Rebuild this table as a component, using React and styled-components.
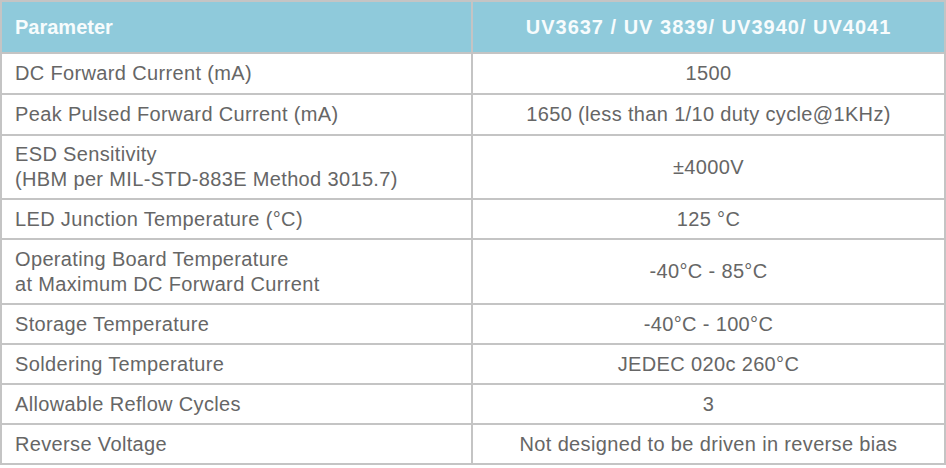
import React from 'react';
import styled, { createGlobalStyle } from 'styled-components';

const GlobalStyle = createGlobalStyle`
  html, body {
    margin: 0;
    padding: 0;
    background: #fff;
  }
`;

const Table = styled.table`
  width: 946px;
  border-collapse: collapse;
  font-family: "Liberation Sans", Arial, sans-serif;
  font-size: 20px;
  color: #666;
  border: 2px solid #c4c4c4;
`;

const HeadRow = styled.tr`
  height: 52px;
  background: #8fcadb;
`;

const HeadCell = styled.th`
  padding: 0 13px;
  font-weight: bold;
  color: #f7fcfd;
  letter-spacing: ${(p) => (p.$center ? '1px' : '0')};
  text-align: ${(p) => (p.$center ? 'center' : 'left')};
  border: 2px solid #c4c4c4;
  border-top-width: 1px;
  width: ${(p) => (p.$center ? 'auto' : '443px')};
`;

const Row = styled.tr`
  height: ${(p) => p.$h}px;
`;

const Cell = styled.td`
  padding: 0 13px;
  line-height: 25px;
  letter-spacing: 0.35px;
  text-align: ${(p) => (p.$center ? 'center' : 'left')};
  border: 2px solid #c4c4c4;
`;

const rows = [
  { h: 41, label: ['DC Forward Current (mA)'], value: '1500' },
  { h: 41, label: ['Peak Pulsed Forward Current (mA)'], value: '1650 (less than 1/10 duty cycle@1KHz)' },
  { h: 64, label: ['ESD Sensitivity', '(HBM per MIL-STD-883E Method 3015.7)'], value: '±4000V' },
  { h: 40, label: ['LED Junction Temperature (°C)'], value: '125 °C' },
  { h: 65, label: ['Operating Board Temperature', 'at Maximum DC Forward Current'], value: '-40°C - 85°C' },
  { h: 40, label: ['Storage Temperature'], value: '-40°C - 100°C' },
  { h: 40, label: ['Soldering Temperature'], value: 'JEDEC 020c 260°C' },
  { h: 40, label: ['Allowable Reflow Cycles'], value: '3' },
  { h: 40, label: ['Reverse Voltage'], value: 'Not designed to be driven in reverse bias' },
];

export default function App() {
  return (
    <>
      <GlobalStyle />
      <Table>
        <thead>
          <HeadRow>
            <HeadCell>Parameter</HeadCell>
            <HeadCell $center>UV3637 / UV 3839/ UV3940/ UV4041</HeadCell>
          </HeadRow>
        </thead>
        <tbody>
          {rows.map((r) => (
            <Row key={r.label[0]} $h={r.h}>
              <Cell>
                {r.label.map((l, i) => (
                  <React.Fragment key={l}>
                    {i > 0 && <br />}
                    {l}
                  </React.Fragment>
                ))}
              </Cell>
              <Cell $center>{r.value}</Cell>
            </Row>
          ))}
        </tbody>
      </Table>
    </>
  );
}
